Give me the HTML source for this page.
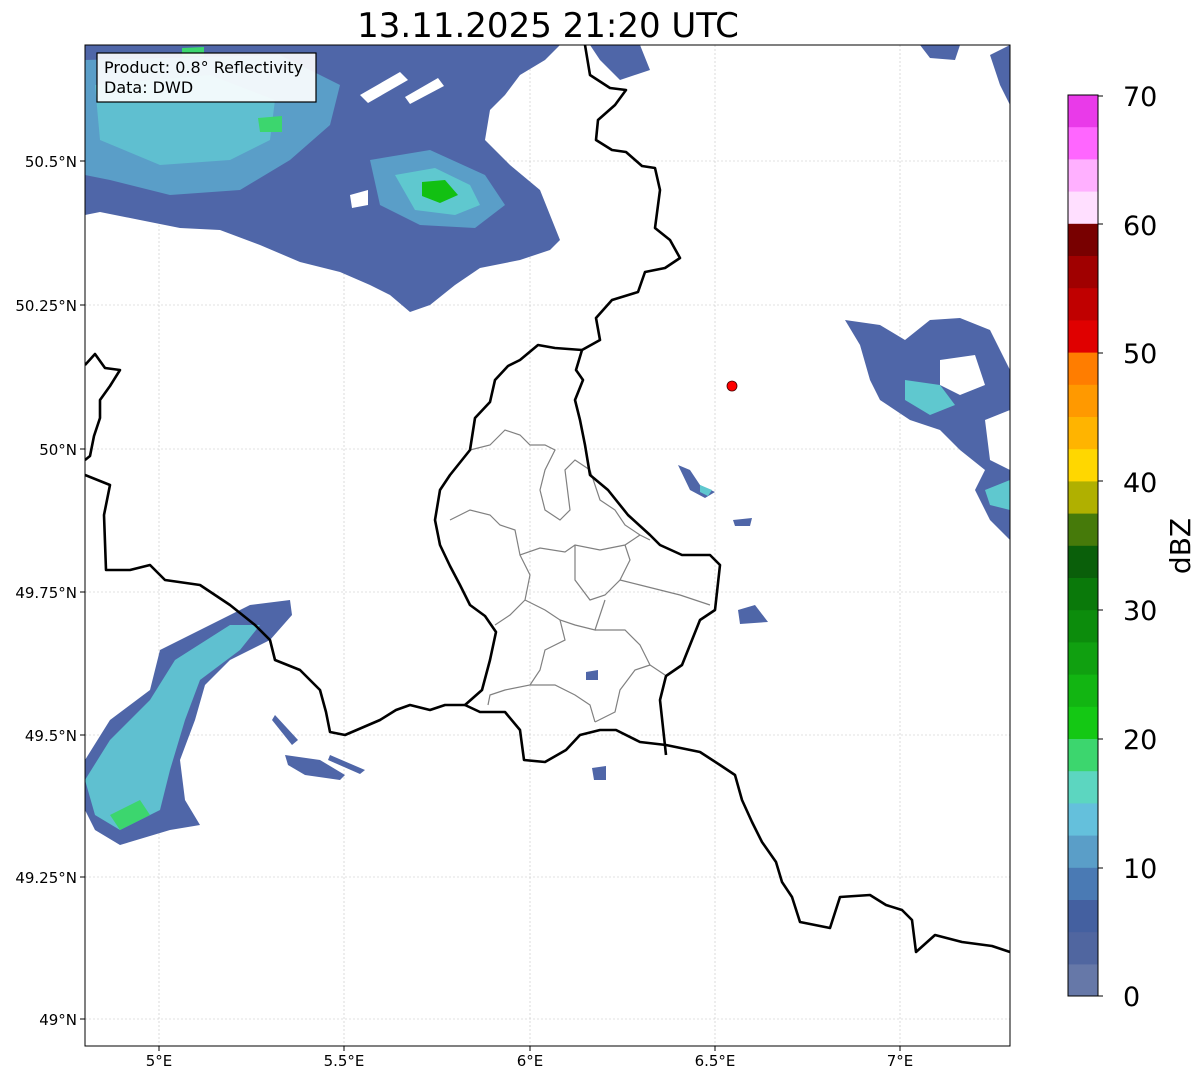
<!DOCTYPE html>
<html><head><meta charset="utf-8"><style>
html,body{margin:0;padding:0;background:#fff;}
body{width:1202px;height:1081px;overflow:hidden;font-family:"Liberation Sans","DejaVu Sans",sans-serif;}
</style></head><body>
<svg width="1202" height="1081" viewBox="0 0 1202 1081" xmlns="http://www.w3.org/2000/svg" font-family="DejaVu Sans, Liberation Sans, sans-serif">
<text x="548" y="37" font-size="34" text-anchor="middle" fill="#000">13.11.2025 21:20 UTC</text>
<defs><clipPath id="ax"><rect x="85" y="45" width="925" height="1001"/></clipPath></defs>
<g clip-path="url(#ax)">
<g stroke="#c4c4c4" stroke-width="0.6" stroke-dasharray="2,2">
<line x1="159" y1="45" x2="159" y2="1046"/><line x1="344" y1="45" x2="344" y2="1046"/><line x1="530" y1="45" x2="530" y2="1046"/><line x1="715" y1="45" x2="715" y2="1046"/><line x1="900" y1="45" x2="900" y2="1046"/>
<line x1="85" y1="161" x2="1010" y2="161"/><line x1="85" y1="305" x2="1010" y2="305"/><line x1="85" y1="449" x2="1010" y2="449"/><line x1="85" y1="592" x2="1010" y2="592"/><line x1="85" y1="735" x2="1010" y2="735"/><line x1="85" y1="877" x2="1010" y2="877"/><line x1="85" y1="1019" x2="1010" y2="1019"/>
</g>
<!-- NW echo -->
<polygon fill="#4f66a8" points="85,45 560,45 545,60 520,75 505,95 490,110 485,140 510,165 540,190 550,215 560,240 550,250 520,260 480,268 455,285 430,305 410,312 390,295 370,285 340,272 300,262 260,245 220,230 180,228 140,220 100,212 85,215"/>
<polygon fill="#5a9ec8" points="85,60 280,55 340,85 330,125 290,160 240,190 170,195 110,180 85,175"/>
<polygon fill="#5fbfd0" points="95,85 210,75 275,100 270,140 230,160 160,165 100,140"/>
<polygon fill="#5a9ec8" points="370,160 430,150 485,175 505,205 475,228 420,225 380,205"/>
<polygon fill="#5fc8cf" points="395,175 435,168 470,185 480,205 455,215 415,210"/>
<polygon fill="#12c012" points="422,182 445,180 458,195 440,203 422,196"/>
<polygon fill="#3cd66e" points="258,118 282,116 282,132 260,132"/>
<polygon fill="#3cd66e" points="182,48 204,47 204,56 182,56"/>
<polygon fill="#fff" points="360,95 400,72 408,80 368,103"/>
<polygon fill="#fff" points="405,97 438,78 444,86 410,104"/>
<polygon fill="#fff" points="350,195 368,190 368,205 352,208"/>
<polygon fill="#4f66a8" points="590,45 640,45 650,70 620,80 600,60"/>
<polygon fill="#4f66a8" points="920,45 960,45 955,60 930,58"/>
<polygon fill="#4f66a8" points="990,55 1010,45 1010,105 1000,85"/>
<!-- SW echo -->
<polygon fill="#4f66a8" points="85,760 110,720 150,690 160,650 210,625 250,605 290,600 292,615 270,640 230,660 205,685 195,720 180,760 185,800 200,825 170,830 120,845 95,830 85,810"/>
<polygon fill="#5fc0d0" points="85,780 110,740 150,700 175,660 230,625 260,625 240,650 200,680 185,720 170,770 160,810 120,830 95,815"/>
<polygon fill="#3cd66e" points="110,815 140,800 150,815 120,830"/>
<polygon fill="#4f66a8" points="275,715 298,740 292,745 272,720"/>
<polygon fill="#4f66a8" points="285,755 320,760 345,775 340,780 305,775 288,765"/>
<polygon fill="#4f66a8" points="330,755 365,770 360,774 328,760"/>
<!-- NE echoes -->
<polygon fill="#4f66a8" points="845,320 880,325 905,340 930,320 960,318 990,330 1010,370 1010,540 990,520 975,490 985,470 960,450 940,430 910,420 880,400 870,380 860,345"/>
<polygon fill="#5fc8cf" points="905,380 940,385 955,405 930,415 905,400"/>
<polygon fill="#5fc8cf" points="985,490 1010,480 1010,510 990,505"/>
<polygon fill="#fff" points="940,360 975,355 985,385 960,395 940,385"/>
<polygon fill="#fff" points="985,420 1010,410 1010,470 990,460"/>
<polygon fill="#4f66a8" points="678,465 690,470 700,485 715,492 705,498 690,490"/>
<polygon fill="#5fc8cf" points="700,485 712,490 708,496 700,492"/>
<polygon fill="#4f66a8" points="733,520 752,518 750,526 735,526"/>
<polygon fill="#4f66a8" points="738,610 755,605 768,622 740,624"/>
<polygon fill="#4f66a8" points="586,672 598,670 598,680 586,680"/>
<polygon fill="#4f66a8" points="592,768 606,766 606,780 594,780"/>
<g fill="none" stroke="#808080" stroke-width="1.2">
<polyline points="470,450 490,445 505,430 520,435 530,445 545,445 555,450 545,470 540,490 545,510 560,520 570,510 565,470 575,460 590,470 600,500 615,510 625,525 640,535 650,540"/>
<polyline points="450,520 470,510 490,515 500,525 515,530 520,555 540,548 565,552 575,545 600,550 625,545 640,535"/>
<polyline points="520,555 530,575 525,600 510,615 495,625"/>
<polyline points="575,545 575,580 590,600 605,595 620,580 630,560 625,545"/>
<polyline points="620,580 640,585 660,590 680,595 710,605"/>
<polyline points="525,600 545,610 560,620 575,625 595,630 605,600"/>
<polyline points="595,630 625,630 640,645 650,665 665,675"/>
<polyline points="560,620 565,640 545,650 540,670 530,685 505,690 490,695 488,705"/>
<polyline points="530,685 555,685 575,695 590,705 595,722"/>
<polyline points="595,722 615,712 620,690 635,670 650,665"/>
</g>
<g fill="none" stroke="#000" stroke-width="2.6" stroke-linejoin="round">
<polyline points="585,45 590,75 610,88 626,90 615,105 598,120 596,140 612,150 626,152 642,166 655,168 660,190 655,228 670,240 680,258 665,268 645,272 638,292 612,300 596,318 600,340 582,350 576,370 583,380 575,400 580,420 585,445 590,475 608,490 628,515 650,535 660,545 682,555 710,555 720,565 715,610 700,620 692,640 682,665 666,676 660,700 666,755"/>
<polyline points="582,350 555,348 538,345 520,360 508,366 495,380 490,402 475,418 470,450 450,475 440,490 435,520 440,545 450,566 460,585 470,605 485,616 496,632 490,660 482,690 465,705 480,712 505,712 520,730 524,760 545,762 566,750 580,735 600,730 616,730 640,742 666,745 700,752 720,765 735,775 742,800 752,822 762,842 776,862 782,882 792,897 800,922 830,928 840,897 870,895 886,905 902,910 912,920 916,952 935,935 962,942 992,946 1010,952"/>
<polyline points="85,475 110,485 104,515 106,570 130,570 150,565 165,580 200,585 230,605 255,625 270,640 275,660 300,670 320,690 326,712 330,732 345,735 380,720 396,710 410,705 430,710 445,705 465,705"/>
<polyline points="85,365 95,354 105,368 120,370 110,386 100,400 100,418 94,436 90,456 85,460"/>
</g>
<circle cx="732" cy="386" r="5" fill="#f00" stroke="#400" stroke-width="0.8"/>
</g>
<rect x="85" y="45" width="925" height="1001" fill="none" stroke="#000" stroke-width="1"/>
<rect x="97" y="53" width="219" height="49" fill="#fff" fill-opacity="0.9" stroke="#000" stroke-width="1.2"/>
<text x="104" y="73" font-size="16" fill="#000">Product: 0.8° Reflectivity</text>
<text x="104" y="93" font-size="16" fill="#000">Data: DWD</text>
<g font-size="15" fill="#000" text-anchor="end">
<text x="77" y="167">50.5°N</text><text x="77" y="311">50.25°N</text><text x="77" y="455">50°N</text><text x="77" y="598">49.75°N</text><text x="77" y="741">49.5°N</text><text x="77" y="883">49.25°N</text><text x="77" y="1025">49°N</text>
</g>
<g font-size="15" fill="#000" text-anchor="middle">
<text x="159" y="1066">5°E</text><text x="344" y="1066">5.5°E</text><text x="530" y="1066">6°E</text><text x="715" y="1066">6.5°E</text><text x="900" y="1066">7°E</text>
</g>
<g stroke="#000" stroke-width="1">
<line x1="80" y1="161" x2="85" y2="161"/><line x1="80" y1="305" x2="85" y2="305"/><line x1="80" y1="449" x2="85" y2="449"/><line x1="80" y1="592" x2="85" y2="592"/><line x1="80" y1="735" x2="85" y2="735"/><line x1="80" y1="877" x2="85" y2="877"/><line x1="80" y1="1019" x2="85" y2="1019"/>
<line x1="159" y1="1046" x2="159" y2="1051"/><line x1="344" y1="1046" x2="344" y2="1051"/><line x1="530" y1="1046" x2="530" y2="1051"/><line x1="715" y1="1046" x2="715" y2="1051"/><line x1="900" y1="1046" x2="900" y2="1051"/>
</g>
<g>
<rect x="1068" y="95.0" width="30" height="32.6" fill="#e93ae9"/>
<rect x="1068" y="127.2" width="30" height="32.6" fill="#ff66ff"/>
<rect x="1068" y="159.4" width="30" height="32.6" fill="#ffb0ff"/>
<rect x="1068" y="191.6" width="30" height="32.6" fill="#ffdfff"/>
<rect x="1068" y="223.8" width="30" height="32.6" fill="#780000"/>
<rect x="1068" y="256.0" width="30" height="32.6" fill="#a00000"/>
<rect x="1068" y="288.2" width="30" height="32.6" fill="#c00000"/>
<rect x="1068" y="320.4" width="30" height="32.6" fill="#e00000"/>
<rect x="1068" y="352.6" width="30" height="32.6" fill="#ff7d00"/>
<rect x="1068" y="384.8" width="30" height="32.6" fill="#ff9900"/>
<rect x="1068" y="417.0" width="30" height="32.6" fill="#ffb400"/>
<rect x="1068" y="449.2" width="30" height="32.6" fill="#ffd700"/>
<rect x="1068" y="481.4" width="30" height="32.6" fill="#b0b000"/>
<rect x="1068" y="513.6" width="30" height="32.6" fill="#467a0a"/>
<rect x="1068" y="545.8" width="30" height="32.6" fill="#0a5f0a"/>
<rect x="1068" y="578.0" width="30" height="32.6" fill="#0a790a"/>
<rect x="1068" y="610.2" width="30" height="32.6" fill="#0c8c0c"/>
<rect x="1068" y="642.4" width="30" height="32.6" fill="#10a010"/>
<rect x="1068" y="674.6" width="30" height="32.6" fill="#12b512"/>
<rect x="1068" y="706.8" width="30" height="32.6" fill="#14c814"/>
<rect x="1068" y="739.0" width="30" height="32.6" fill="#3cd66e"/>
<rect x="1068" y="771.2" width="30" height="32.6" fill="#5cd6c0"/>
<rect x="1068" y="803.4" width="30" height="32.6" fill="#64c0dc"/>
<rect x="1068" y="835.6" width="30" height="32.6" fill="#5a9ec8"/>
<rect x="1068" y="867.8" width="30" height="32.6" fill="#4a7ab4"/>
<rect x="1068" y="900.0" width="30" height="32.6" fill="#4460a0"/>
<rect x="1068" y="932.2" width="30" height="32.6" fill="#5066a0"/>
<rect x="1068" y="964.4" width="30" height="31.6" fill="#6678a8"/>
<rect x="1068" y="95" width="30" height="901" fill="none" stroke="#000" stroke-width="1"/>
<g stroke="#000" stroke-width="1">
<line x1="1098" y1="96" x2="1103" y2="96"/><line x1="1098" y1="224" x2="1103" y2="224"/><line x1="1098" y1="353" x2="1103" y2="353"/><line x1="1098" y1="481" x2="1103" y2="481"/><line x1="1098" y1="610" x2="1103" y2="610"/><line x1="1098" y1="739" x2="1103" y2="739"/><line x1="1098" y1="868" x2="1103" y2="868"/><line x1="1098" y1="996" x2="1103" y2="996"/>
</g>
<g font-size="27" fill="#000">
<text x="1123" y="106">70</text><text x="1123" y="235">60</text><text x="1123" y="363">50</text><text x="1123" y="492">40</text><text x="1123" y="620">30</text><text x="1123" y="749">20</text><text x="1123" y="878">10</text><text x="1123" y="1006">0</text>
</g>
<text transform="translate(1190,546) rotate(-90)" font-size="28" text-anchor="middle" fill="#000">dBZ</text>
</g>
</svg>
</body></html>
